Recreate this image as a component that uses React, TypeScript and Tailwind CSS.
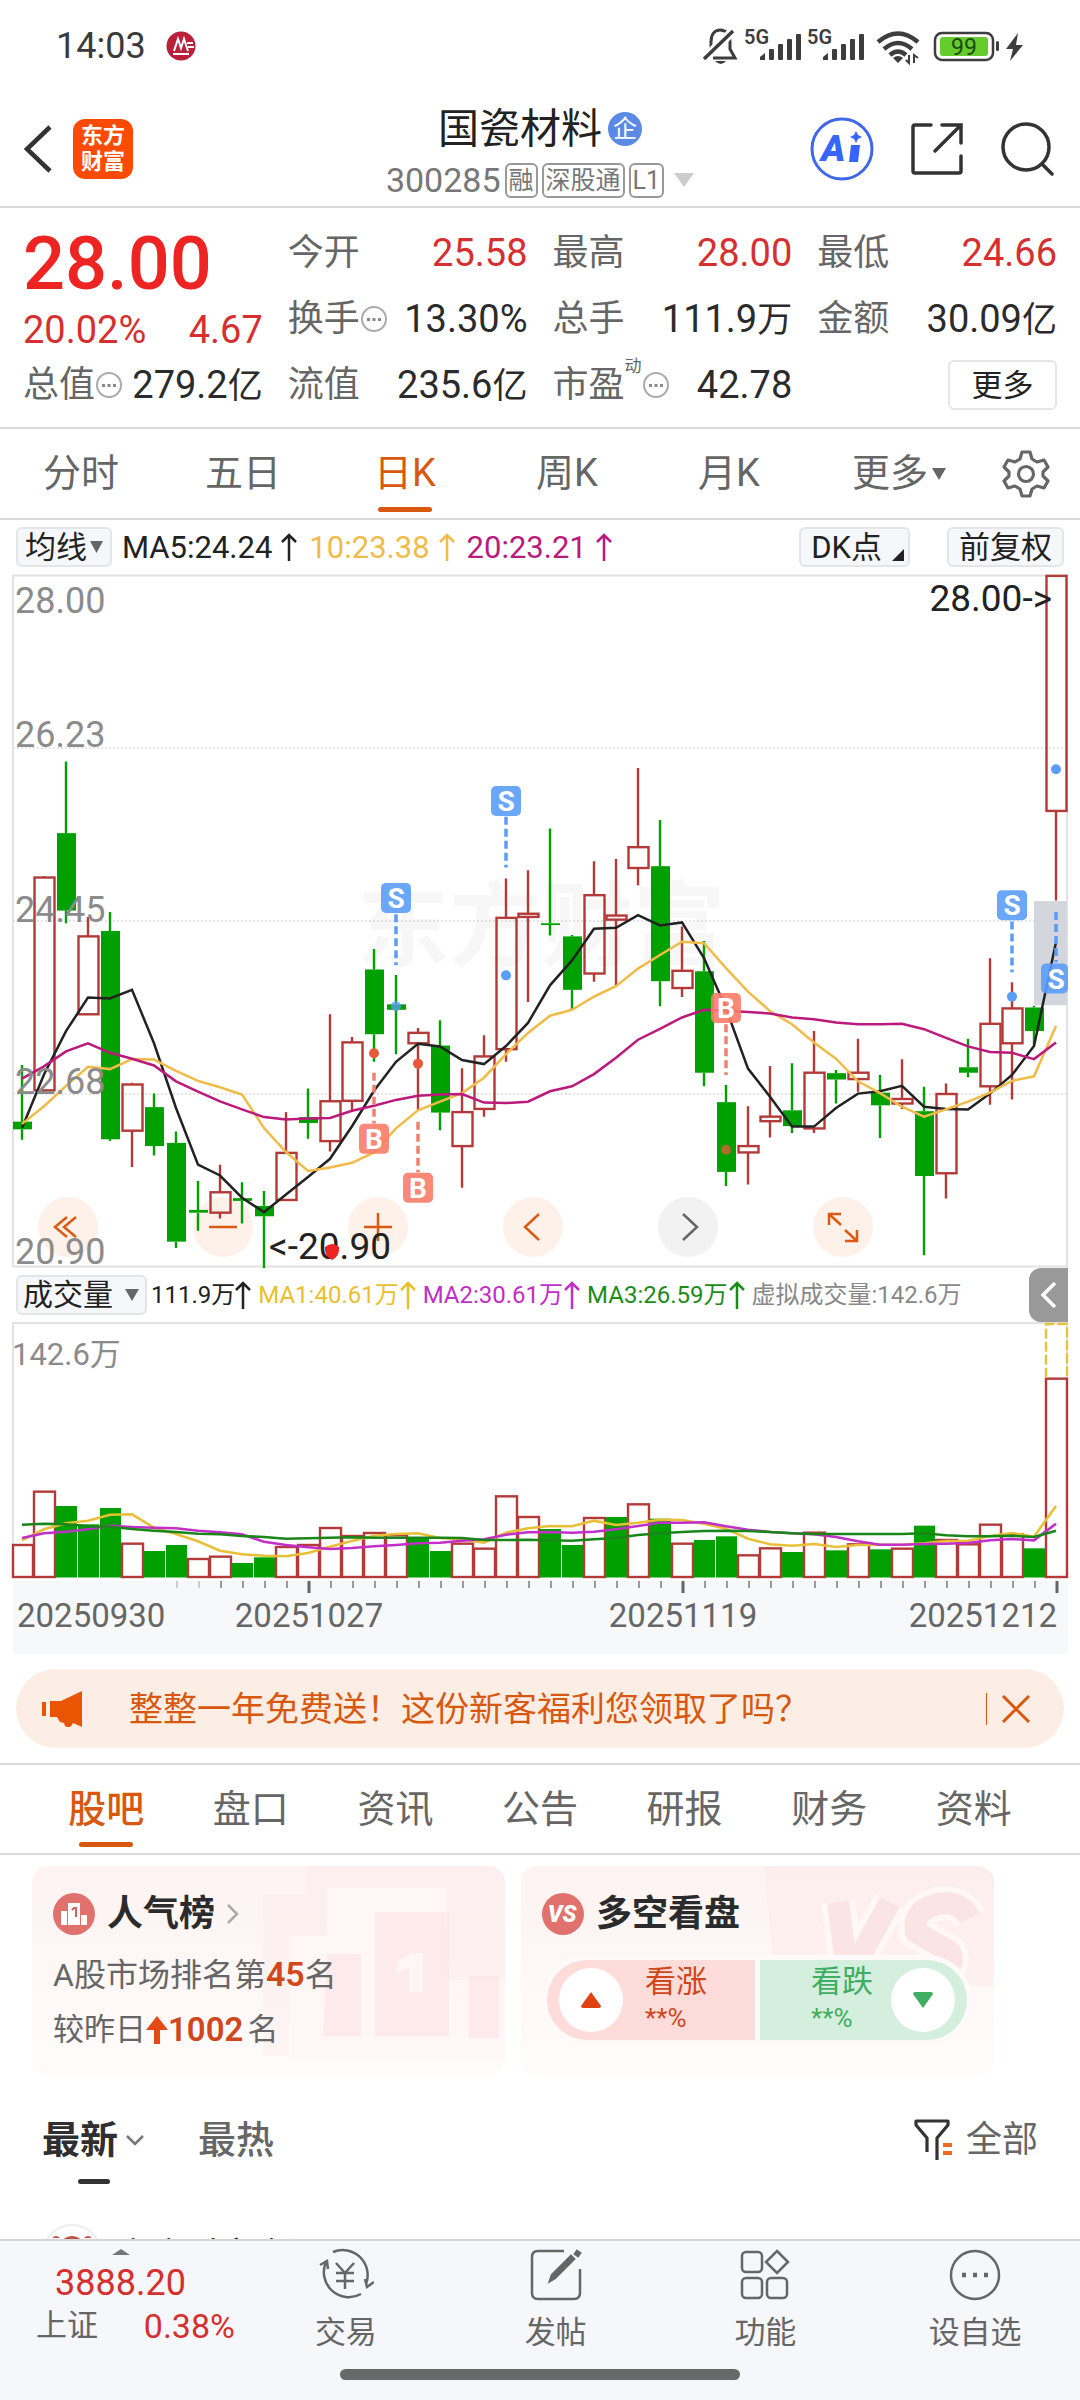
import { ReactNode } from 'react';

type Candle = [high: number, top: number, bottom: number, low: number, up: 0 | 1];

// high, body top, body bottom, low, rising
const candles: Candle[] = [
  [1093, 1218, 1235, 1258, 0], [676, 679, 1149, 1155, 1], [423, 581, 752, 780, 0], [766, 809, 981, 981, 1],
  [755, 797, 1257, 1261, 0], [1132, 1136, 1238, 1318, 1], [1156, 1186, 1272, 1293, 0], [1240, 1265, 1483, 1497, 0],
  [1349, 1413, 1419, 1459, 0], [1313, 1374, 1419, 1432, 1], [1352, 1387, 1393, 1443, 0], [1371, 1404, 1427, 1541, 0],
  [1197, 1287, 1391, 1391, 1], [1145, 1208, 1221, 1256, 0], [981, 1173, 1261, 1284, 1], [1031, 1043, 1172, 1195, 1],
  [837, 882, 1025, 1086, 0], [894, 959, 971, 1069, 0], [1011, 1022, 1045, 1192, 1], [994, 1050, 1198, 1237, 0],
  [1100, 1197, 1272, 1364, 1], [1027, 1074, 1190, 1207, 1], [681, 768, 1058, 1086, 1], [663, 759, 766, 954, 1],
  [571, 780, 784, 807, 0], [806, 809, 927, 970, 0], [643, 718, 891, 909, 1], [638, 763, 772, 918, 1],
  [437, 612, 658, 696, 1], [552, 654, 908, 963, 0], [787, 885, 923, 943, 1], [819, 886, 1110, 1140, 0],
  [1137, 1175, 1329, 1360, 0], [1184, 1272, 1286, 1357, 1], [1095, 1207, 1217, 1253, 1], [1089, 1193, 1228, 1243, 0],
  [1018, 1110, 1233, 1243, 1], [1104, 1111, 1125, 1178, 0], [1035, 1110, 1124, 1152, 1], [1115, 1154, 1182, 1254, 0],
  [1080, 1168, 1178, 1190, 1], [1141, 1195, 1338, 1513, 0], [1134, 1157, 1332, 1388, 1], [1035, 1098, 1110, 1120, 0],
  [857, 1002, 1140, 1181, 1], [910, 968, 1045, 1169, 1], [962, 966, 1018, 1050, 0], [12, 13, 532, 730, 1],
];

const ma5 = [1232, 1114, 1018, 944, 946, 927, 1045, 1188, 1313, 1337, 1386, 1418, 1379, 1340, 1300, 1228, 1150, 1086, 1046, 1052, 1082, 1091, 1051, 1000, 917, 862, 792, 790, 762, 785, 778, 857, 968, 1101, 1163, 1229, 1229, 1188, 1156, 1151, 1139, 1185, 1190, 1191, 1156, 1115, 1051, 822];
const ma10 = [1223, 1184, 1139, 1097, 1102, 1080, 1081, 1106, 1128, 1142, 1158, 1232, 1285, 1327, 1319, 1309, 1286, 1233, 1193, 1174, 1155, 1121, 1069, 1022, 984, 971, 942, 919, 880, 850, 821, 824, 879, 931, 974, 1003, 1043, 1079, 1129, 1155, 1185, 1207, 1191, 1174, 1154, 1128, 1118, 1007];
const ma20 = [1123, 1096, 1063, 1045, 1066, 1079, 1094, 1129, 1152, 1173, 1191, 1208, 1213, 1211, 1210, 1194, 1183, 1170, 1161, 1158, 1157, 1176, 1177, 1174, 1151, 1140, 1113, 1077, 1037, 1013, 988, 971, 973, 976, 979, 988, 992, 999, 1003, 1003, 1002, 1014, 1033, 1052, 1064, 1066, 1080, 1043];

const volumes = [852, 692, 738, 793, 744, 848, 873, 855, 894, 887, 909, 892, 858, 852, 801, 825, 816, 823, 836, 873, 848, 863, 706, 768, 807, 855, 771, 771, 730, 776, 848, 840, 829, 883, 862, 876, 815, 871, 850, 868, 863, 797, 837, 850, 791, 820, 865, 353];
// the volume pane colours follow the previous close, so a few bars differ from the candles
const volumeUp = '110001001100111111001111001010100110101010111101';
const vol1 = [841, 808, 790, 782, 764, 763, 803, 822, 844, 872, 883, 887, 889, 879, 860, 843, 827, 822, 820, 834, 838, 848, 818, 805, 798, 799, 782, 795, 788, 779, 780, 791, 806, 836, 853, 857, 852, 861, 855, 854, 854, 850, 843, 842, 828, 819, 830, 738];
const vol2 = [834, 820, 815, 808, 797, 801, 803, 805, 812, 817, 823, 845, 855, 862, 867, 864, 859, 855, 850, 848, 842, 838, 824, 817, 816, 818, 815, 808, 798, 788, 788, 787, 799, 809, 816, 820, 823, 831, 844, 854, 854, 852, 851, 849, 841, 837, 841, 791];
const vol3 = [794, 791, 793, 799, 800, 807, 812, 816, 821, 823, 828, 831, 836, 835, 833, 832, 833, 833, 833, 833, 834, 840, 840, 839, 841, 842, 838, 834, 825, 820, 816, 813, 812, 813, 816, 820, 822, 822, 822, 822, 822, 820, 826, 829, 829, 827, 831, 812];

const cx = (i: number) => 22 + i * 22;
const py = (v: number) => v / 2.208 - 4;
const vy = (v: number) => v / 3 - 62;
const line = (values: number[], y: (v: number) => number) =>
  values.map((v, i) => `${cx(i)},${y(v).toFixed(1)}`).join(' ');

const RED = '#b33a38';
const GREEN = '#00a000';

const signals = [
  { i: 16, kind: 'B', box: 1256, from: 1110, to: 1222, dot: 1067 },
  { i: 18, kind: 'B', box: 1364, from: 1218, to: 1330, dot: 1090 },
  { i: 32, kind: 'B', box: 967, from: 1003, to: 1115, dot: 1280 },
  { i: 17, kind: 'S', box: 724, from: 760, to: 872, dot: 963 },
  { i: 22, kind: 'S', box: 510, from: 545, to: 657, dot: 895 },
  { i: 45, kind: 'S', box: 740, from: 776, to: 888, dot: 942 },
  { i: 47, kind: 'S', box: 902, from: 755, to: 866, dot: 440 },
];

function StatusBar() {
  return (
    <div className="flex h-[92px] items-center justify-between pl-14 pr-[56px] text-[#3a3a3a]">
      <div className="flex items-center gap-5">
        <span className="text-[36px] leading-none">14:03</span>
        <svg className="h-[30px] w-[30px]" viewBox="0 0 30 30">
          <circle cx="15" cy="15" r="14.5" fill="#b9203a" />
          <path d="M8 20 12 8l3 9 3-9 4 12M7 23h16M21 12h6M22 16h6" fill="none" stroke="#fff" strokeWidth="2" />
        </svg>
      </div>
      <svg className="h-[40px] w-[322px]" viewBox="702 25 322 40" fill="#3d3d3d">
        <path d="M711 53V41c0-8 4-12 9-12 6 0 10 4 10 12v7l5 9h-22" fill="none" stroke="#3d3d3d" strokeWidth="3" />
        <path d="M704 58 733 30" stroke="#fff" strokeWidth="9" />
        <path d="M704 58 733 30" stroke="#3d3d3d" strokeWidth="3.5" />
        <path d="M715 60h11q-5 6-11 0Z" />
        <text x="744" y="43" fontSize="20" fontWeight="600">5G</text>
        <text x="807" y="43" fontSize="20" fontWeight="600">5G</text>
        {[0, 63].map((dx) => (
          <g key={dx}>
            <path d={`M${760 + dx} 59v-3l5-4v7Z`} />
            <rect x={769 + dx} y="48" width="5" height="11" rx="1" />
            <rect x={778 + dx} y="43" width="5" height="16" rx="1" />
            <rect x={787 + dx} y="38" width="5" height="21" rx="1" />
            <rect x={796 + dx} y="33" width="5" height="26" rx="1" />
          </g>
        ))}
        <g fill="none" stroke="#3d3d3d" strokeWidth="4.5">
          <path d="M878 41q20-17 40 0" />
          <path d="M884 48q14-12 28 0" />
          <path d="M890 54q8-7 16 0" />
        </g>
        <path d="M893 57q5-4 10 0l-5 5Z" />
        <path d="M909 54v8l-3-3M914 62v-8l4 3" fill="none" stroke="#3d3d3d" strokeWidth="2" />
        <rect x="935" y="32" width="58" height="27" rx="7" fill="#fff" stroke="#3d3d3d" strokeWidth="2.5" />
        <rect x="940" y="36" width="48" height="19" rx="3" fill="#66cc2c" />
        <text x="964" y="54" textAnchor="middle" fontSize="23" fill="#1d4a10">99</text>
        <rect x="996" y="40" width="3" height="10" rx="1.5" />
        <path d="m1018 32-12 16h7l-3 12 13-16h-7Z" />
      </svg>
    </div>
  );
}

function Tag({ children }: { children: ReactNode }) {
  return (
    <span className="flex h-[35px] items-center rounded-md border-2 border-[#999] px-[2px] text-[25px] leading-none">
      {children}
    </span>
  );
}

function Header() {
  return (
    <header className="relative flex h-[116px] items-center justify-between border-b-2 border-[#d9d9d9] pl-6 pr-[26px]">
      <div className="flex items-center gap-[21px]">
        <button aria-label="返回">
          <svg className="h-[48px] w-[28px]" viewBox="0 0 28 48" fill="none" stroke="#333" strokeWidth="4.5">
            <path d="M26 2 3 24l23 22" />
          </svg>
        </button>
        <a href="#home" className="flex h-[60px] w-[60px] flex-col items-center justify-center rounded-xl bg-[#fd4a05] text-[22px] font-bold leading-[26px] text-white">
          <span>东方</span>
          <span>财富</span>
        </a>
      </div>
      <div className="absolute inset-x-0 top-[13px] mx-auto flex w-fit flex-col items-center">
        <h1 className="flex items-center gap-[6px] text-[41px] leading-[48px] text-[#222]">
          国瓷材料
          <span className="flex h-[34px] w-[34px] items-center justify-center rounded-full bg-[#5b8ae5] text-[24px] leading-none text-white">企</span>
        </h1>
        <div className="flex items-center gap-1 text-[34px] leading-[54px] text-[#777]">
          300285
          <Tag>融</Tag>
          <Tag>深股通</Tag>
          <Tag>L1</Tag>
          <svg className="ml-[6px] h-[14px] w-[20px]" viewBox="0 0 20 14"><path d="M0 0h20L10 14Z" fill="#ccc" /></svg>
        </div>
      </div>
      <div className="flex items-center gap-[36px]">
        <button aria-label="AI">
          <svg className="h-[64px] w-[64px]" viewBox="0 0 64 64">
            <circle cx="32" cy="32" r="30" fill="none" stroke="#3f68e8" strokeWidth="3" />
            <text x="11" y="44" fontSize="37" fontWeight="900" fontStyle="italic" fill="#3565fb">A</text>
            <path d="M41 28h9l-2 17h-9ZM46 14l2 4 4 2-4 2-2 4-2-4-4-2 4-2Z" fill="#3565fb" />
          </svg>
        </button>
        <button aria-label="分享">
          <svg className="h-[54px] w-[54px]" viewBox="0 0 54 54" fill="none" stroke="#333" strokeWidth="3.5" strokeLinecap="round">
            <path d="M21 3H5q-2 0-2 2v44q0 2 2 2h44q2 0 2-2V34M32 3h19v18M51 3 25 29" />
          </svg>
        </button>
        <button aria-label="搜索">
          <svg className="h-[54px] w-[54px]" viewBox="0 0 54 54" fill="none" stroke="#333" strokeWidth="3.5" strokeLinecap="round">
            <circle cx="26" cy="25" r="23" />
            <path d="m42 42 10 10" />
          </svg>
        </button>
      </div>
    </header>
  );
}

function More() {
  return (
    <svg className="h-[28px] w-[28px] shrink-0" viewBox="0 0 28 28">
      <circle cx="14" cy="14" r="12" fill="none" stroke="#aaa" strokeWidth="2" />
      <path d="M7 13h3v3H7ZM12.500 13h3v3h-3ZM18 13h3v3h-3Z" fill="#888" />
    </svg>
  );
}

function Stat({ label, value, unit, red, more, sup }: { label: string; value: string; unit?: string; red?: boolean; more?: boolean; sup?: string }) {
  return (
    <div className="flex h-[66px] items-center justify-between whitespace-nowrap text-[36px] text-[#666]">
      <dt className="flex items-center">
        {label}
        {sup && <sup className="mb-5 text-[17px] leading-none">{sup}</sup>}
        {more && <More />}
      </dt>
      <dd className={red ? 'text-[38px] text-[#d5302f]' : 'text-[38px] text-[#2b2b2b]'}>
        {value}
        {unit && <span className="text-[35px]">{unit}</span>}
      </dd>
    </div>
  );
}

function Quote() {
  return (
    <section className="border-b-2 border-[#d9d9d9] px-[23px] pb-[9px] pt-3">
      <dl className="grid grid-cols-4 gap-x-[25px]">
        <div>
          <p className="text-[74px] font-medium leading-[88px] text-[#ee2423]">28.00</p>
          <p className="flex justify-between text-[38px] leading-[44px] text-[#d5302f]">
            <span>20.02%</span>
            <span>4.67</span>
          </p>
          <Stat label="总值" value="279.2" unit="亿" more />
        </div>
        <div>
          <Stat label="今开" value="25.58" red />
          <Stat label="换手" value="13.30%" more />
          <Stat label="流值" value="235.6" unit="亿" />
        </div>
        <div>
          <Stat label="最高" value="28.00" red />
          <Stat label="总手" value="111.9" unit="万" />
          <Stat label="市盈" sup="动" value="42.78" more />
        </div>
        <div>
          <Stat label="最低" value="24.66" red />
          <Stat label="金额" value="30.09" unit="亿" />
          <div className="flex h-[66px] items-center justify-end">
            <button className="h-[50px] w-[109px] rounded-md border-2 border-[#e6e6e6] text-[31px] leading-none text-[#222]">更多</button>
          </div>
        </div>
      </dl>
    </section>
  );
}

function PeriodTabs() {
  return (
    <nav className="flex h-[91px] items-center border-b-2 border-[#d9d9d9] text-[38px] text-[#666]">
      <div className="grid h-full flex-1 grid-cols-6">
        {['分时', '五日', '日K', '周K', '月K', '更多'].map((name) => (
          <button key={name} className={`relative flex items-center justify-center gap-1 ${name === '日K' ? 'text-[#d9580f]' : ''} ${name === '更多' ? 'pl-4' : ''}`}>
            {name}
            {name === '更多' && <svg className="h-[12px] w-[14px]" viewBox="0 0 14 12"><path d="M0 0h14L7 12Z" fill="#666" /></svg>}
            {name === '日K' && <span className="absolute bottom-[6px] h-[5px] w-[54px] rounded-full bg-[#d9580f]" />}
          </button>
        ))}
      </div>
      <button aria-label="设置" className="flex w-[108px] justify-center">
        <svg className="h-[48px] w-[48px]" viewBox="0 0 48 48" fill="none" stroke="#666" strokeWidth="3.2" strokeLinejoin="round">
          <path d="M20 2h8l2 7 5 3 7-2 4 7-5 5v4l5 5-4 7-7-2-5 3-2 7h-8l-2-7-5-3-7 2-4-7 5-5v-4l-5-5 4-7 7 2 5-3Z" />
          <circle cx="24" cy="24" r="7.500" />
        </svg>
      </button>
    </nav>
  );
}

function Up() {
  return (
    <svg className="h-[28px] w-[16px]" viewBox="0 0 16 28" fill="none" stroke="currentColor" strokeWidth="2.5">
      <path d="M8 28V2M1 9l7-7 7 7" />
    </svg>
  );
}

function MaBar() {
  const pill = 'flex h-[40px] items-center rounded-md border-2 border-[#e3e5e8] bg-[#f6f7fa] text-[#222]';
  return (
    <div className="flex h-[54px] items-center px-4 text-[31px] leading-none">
      <button className={`${pill} gap-[3px] px-[7px]`}>
        均线
        <svg className="h-[12px] w-[13px]" viewBox="0 0 13 12"><path d="M0 0h13L6.500 12Z" fill="#666" /></svg>
      </button>
      <div className="flex flex-1 items-center gap-3 pl-[10px]">
        <span className="flex items-center gap-[9px] text-[#222]">MA5:24.24<Up /></span>
        <span className="flex items-center gap-[9px] text-[#f0bb4b]">10:23.38<Up /></span>
        <span className="flex items-center gap-[9px] text-[#bb1a7c]">20:23.21<Up /></span>
      </div>
      <button className={`${pill} mr-[37px] gap-[10px] pl-[10px] pr-1`}>
        DK点
        <svg className="mt-4 h-[12px] w-[12px]" viewBox="0 0 12 12"><path d="M12 0v12H0Z" fill="#222" /></svg>
      </button>
      <button className={`${pill} px-[10px]`}>前复权</button>
    </div>
  );
}

function KLine() {
  return (
    <svg className="pointer-events-none relative block w-full" viewBox="0 0 1080 694">
      <text x="541" y="385" textAnchor="middle" fontSize="92" fontWeight="700" fill="#f7f7f7">东方财富</text>
      <path d="M13 1.500H1067V692.500H13Z" fill="none" stroke="#e2e2e2" strokeWidth="2" />
      <path d="M13 174H1067M13 347H1067M13 520H1067" stroke="#ccc" strokeDasharray="2 2" />
      {candles.map(([high, top, bottom, low, up], i) => (
        <g key={i} fill={up ? 'none' : GREEN} stroke={up ? RED : GREEN} strokeWidth="2.4">
          <path d={`M${cx(i)} ${py(high)}V${py(top)}M${cx(i)} ${py(bottom)}V${py(low)}`} />
          {up
            ? <rect x={cx(i) - 9.5} y={py(top)} width="20" height={py(bottom) - py(top)} />
            : <rect x={cx(i) - 9} y={py(top)} width="19" height={Math.max(py(bottom) - py(top), 1)} stroke="none" />}
        </g>
      ))}
      <rect x="1034" y={py(731)} width="33" height={py(961) - py(731)} fill="#d3d7dd" />
      <g fill="none" strokeWidth="2.5">
        <polyline points={line(ma5, py)} stroke="#222" />
        <polyline points={line(ma10, py)} stroke="#f1bb48" />
        <polyline points={line(ma20, py)} stroke="#bb1a7c" />
      </g>
      {signals.map((s) => (
        <g key={s.i} fill={s.kind === 'S' ? '#5b9df8' : '#f97c68'} stroke="none">
          <path d={`M${cx(s.i)} ${py(s.from)}V${py(s.to)}`} stroke={s.kind === 'S' ? '#5b9df8' : '#f0806f'} strokeWidth="3.5" strokeDasharray="8 4" />
          <circle cx={cx(s.i)} cy={py(s.dot)} r="5" fill={s.kind === 'S' ? '#5b9df8' : '#e8593a'} opacity={s.i === 32 || s.i === 17 ? 0.75 : 1} />
          <rect x={cx(s.i) - 15} y={py(s.box) - 15} width={s.i === 47 ? 27 : 30} height="30" rx="5" opacity="0.9" />
          <text x={cx(s.i)} y={py(s.box) + 10} textAnchor="middle" fontSize="28" fontWeight="700" fill="#fff">{s.kind}</text>
        </g>
      ))}
      <g fontSize="36" fill="#8b8b8b">
        <text x="15" y="39">28.00</text>
        <text x="15" y="173">26.23</text>
        <text x="15" y="348">24.45</text>
        <text x="15" y="520">22.68</text>
        <text x="15" y="690">20.90</text>
      </g>
      <g fontSize="37" fill="#222">
        <text x="1052" y="37" textAnchor="end">28.00-&gt;</text>
        <text x="269" y="685">&lt;-20.90</text>
      </g>
      <path d="M325 673q7-6 14 0 1 9-7 13-8-4-7-13Z" fill="#ee2423" />
    </svg>
  );
}

const controls = [
  { label: '最早', d: 'M29 20 17 30l12 10M38 20 26 30l12 10' },
  { label: '缩小', d: 'M16 30h28' },
  { label: '放大', d: 'M16 30h28M30 16v28' },
  { label: '向左', d: 'M36 17 22 30l14 13' },
  { label: '向右', d: 'M25 17l14 13-14 13' },
  { label: '全屏', d: 'M16 28V17h12M16 17l12 11M44 33v11H32M44 44 32 33' },
];

function ChartControls() {
  return (
    <div className="absolute inset-x-0 bottom-[11px] flex gap-[95px] pl-[38px]">
      {controls.map(({ label, d }) => (
        <button key={label} aria-label={label} className={`h-[60px] w-[60px] rounded-full ${label === '向右' ? 'bg-[#f2f2f2] text-[#666]' : 'bg-[#fef1e9] text-[#dd5a12]'}`}>
          <svg viewBox="0 0 60 60" fill="none" stroke="currentColor" strokeWidth="2.5"><path d={d} /></svg>
        </button>
      ))}
    </div>
  );
}

function VolumeBar() {
  return (
    <div className="flex h-[54px] items-center whitespace-nowrap pl-4 pr-3 text-[24px] leading-none">
      <button className="flex h-[40px] items-center gap-3 rounded-md border-2 border-[#e3e5e8] bg-[#f6f7fa] px-[5px] text-[30px] text-[#222]">
        成交量
        <svg className="mr-[1px] h-[12px] w-[14px]" viewBox="0 0 14 12"><path d="M0 0h14L7 12Z" fill="#666" /></svg>
      </button>
      <div className="flex flex-1 items-center gap-[7px] pl-1">
        <span className="flex items-center text-[#222]">111.9万<Up /></span>
        <span className="flex items-center gap-px text-[#e8c02e]">MA1:40.61万<Up /></span>
        <span className="flex items-center gap-px text-[#c02fc6]">MA2:30.61万<Up /></span>
        <span className="flex items-center gap-px text-[#1a8c1a]">MA3:26.59万<Up /></span>
        <span className="text-[#888]">虚拟成交量:142.6万</span>
      </div>
      <button aria-label="展开" className="flex h-full w-[39px] items-center justify-center rounded-l-xl bg-[#999]">
        <svg className="h-[26px] w-[16px]" viewBox="0 0 16 26" fill="none" stroke="#fff" strokeWidth="3.5"><path d="M14 1 2 13l12 12" /></svg>
      </button>
    </div>
  );
}

function Volume() {
  return (
    <svg className="block w-full" viewBox="0 0 1080 332">
      <rect x="13" y="259" width="1055" height="73" fill="#f7f8fa" />
      <path d="M13 255V1H1067V255" fill="none" stroke="#e2e2e2" strokeWidth="2" />
      <text x="12" y="43" fontSize="31" fill="#8b8b8b">142.6万</text>
      {volumes.map((v, i) =>
        volumeUp[i] === '1'
          ? <rect key={i} x={cx(i) - (i === 0 ? 9 : 10)} y={vy(v) + 1} width={i === 0 ? 20 : 21} height={254 - vy(v)} fill="#fff" stroke={RED} strokeWidth="2.4" />
          : <rect key={i} x={cx(i) - 10} y={vy(v)} width="21" height={255.500 - vy(v)} fill={GREEN} />
      )}
      <path d={`M1046 ${vy(353)}V2H1067V${vy(353)}`} fill="none" stroke="#e5c341" strokeWidth="2.4" strokeDasharray="10 3" />
      <g fill="none" strokeWidth="2.6">
        <polyline points={line(vol1, vy)} stroke="#e9bf38" />
        <polyline points={line(vol2, vy)} stroke="#c22fc8" />
        <polyline points={line(vol3, vy)} stroke="#1a861a" />
      </g>
      {volumes.map((_, i) =>
        i < 7 ? null : [13, 30, 47].includes(i)
          ? <path key={i} d={`M${cx(i) + 1} 259v12`} stroke="#666" strokeWidth="3" />
          : <path key={i} d={`M${cx(i) + 1} 259v7`} stroke={i < 9 ? '#ccc' : '#999'} strokeWidth="2" />
      )}
      <g fontSize="33" fill="#666">
        <text x="17" y="305">20250930</text>
        <text x="309" y="305" textAnchor="middle">20251027</text>
        <text x="683" y="305" textAnchor="middle">20251119</text>
        <text x="1057" y="305" textAnchor="end">20251212</text>
      </g>
    </svg>
  );
}

function Banner() {
  return (
    <div className="mx-4 mb-[15px] mt-[15px] flex h-[79px] items-center rounded-full bg-[#fceee5] pl-[26px] pr-[33px] text-[#d9580f]">
      <svg className="h-[36px] w-[40px]" viewBox="0 0 40 36" fill="#ea5504">
        <path d="M0 11h4v14H0ZM8 10h11L40 0v36l-9-4q-2 5-6 4l-2-1-1-3-4-1-3-5H8Z" />
      </svg>
      <a href="#offer" className="flex-1 pl-[47px] text-[34px] leading-none">整整一年免费送！这份新客福利您领取了吗？</a>
      <span className="mr-[14px] h-[32px] w-px bg-[#d9580f]" />
      <button aria-label="关闭">
        <svg className="h-[28px] w-[30px]" viewBox="0 0 30 28" fill="none" stroke="currentColor" strokeWidth="3"><path d="m2 1 26 26M28 1 2 27" /></svg>
      </button>
    </div>
  );
}

function InfoTabs() {
  return (
    <nav className="flex h-[92px] items-center border-y-2 border-[#d9d9d9] px-[34px] text-[38px] text-[#666]">
      {['股吧', '盘口', '资讯', '公告', '研报', '财务', '资料'].map((name) => (
        <button key={name} className={`relative flex h-full flex-1 items-center justify-center ${name === '股吧' ? 'font-medium text-[#d9580f]' : ''}`}>
          {name}
          {name === '股吧' && <span className="absolute bottom-[6px] h-[5px] w-[54px] rounded-full bg-[#d9580f]" />}
        </button>
      ))}
    </nav>
  );
}

function RankCard() {
  return (
    <article className="relative h-[210px] flex-1 overflow-hidden rounded-2xl bg-gradient-to-b from-[#fdf3f2] to-[#fffcfb] px-[21px] pt-[25px]">
      <svg className="absolute bottom-0 right-0 h-full w-[242px]" viewBox="0 0 242 210">
        <path d="M0 28h44V0h198v190H0Z" fill="#fbe9e8" opacity="0.4" />
        <path d="M26 70h38V22h120v92h58v80H26Z" fill="#fff8f7" opacity="0.8" />
        <path d="M64 88h34v82H60ZM112 46h74v124h-74ZM206 110h30v62h-30Z" fill="#f9dfde" opacity="0.5" />
        <path d="M134 96l14-9h12v39h-14v-24l-12 5Z" fill="#fff6f5" />
      </svg>
      <h2 className="relative flex items-center gap-3 text-[36px] font-bold leading-[46px] text-[#2b2b2b]">
        <svg className="h-[42px] w-[42px]" viewBox="0 0 42 42">
          <circle cx="21" cy="21" r="21" fill="#e0716c" />
          <path d="M8 18h6v14H8ZM15 10h12v22H15ZM28 22h6v10h-6Z" fill="#fff" />
          <path d="m19 17 2-2h2v9" fill="none" stroke="#d9605c" strokeWidth="2" />
        </svg>
        <span>人气榜</span>
        <svg className="h-[20px] w-[12px]" viewBox="0 0 12 20" fill="none" stroke="#aaa" strokeWidth="2.5"><path d="m1 1 9 9-9 9" /></svg>
      </h2>
      <p className="relative mt-[9px] text-[32px] leading-[56px] text-[#666]">A股市场排名第<b className="text-[34px] font-semibold text-[#d0471b]">45</b>名</p>
      <p className="relative flex items-center text-[31px] leading-[54px] text-[#666]">
        较昨日
        <svg className="h-[28px] w-[22px]" viewBox="0 0 22 28" fill="#e64a14"><path d="M11 0 22 14h-8v14H8V14H0Z" /></svg>
        <b className="mr-1 text-[33px] font-semibold text-[#d0471b]">1002</b> 名
      </p>
    </article>
  );
}

function VoteCard() {
  return (
    <article className="relative h-[210px] flex-1 overflow-hidden rounded-2xl bg-gradient-to-b from-[#fdf3f2] to-[#fffcfb] px-[21px] pt-[25px]">
      <svg className="absolute right-0 top-0 h-full w-[230px]" viewBox="0 0 230 210">
        <path d="M0 0h230v120H12Z" fill="#fbe9e8" opacity="0.5" />
        <g fill="none" strokeLinejoin="round">
          <path d="M74 36l10 76 42-76M206 52q-10-18-32-14-26 6-22 28l34 20q8 18-20 24" stroke="#fff8f7" strokeWidth="34" />
          <path d="M74 36l10 76 42-76M206 52q-10-18-32-14-26 6-22 28l34 20q8 18-20 24" stroke="#fae0df" strokeWidth="22" opacity="0.8" />
        </g>
      </svg>
      <h2 className="relative flex items-center gap-3 text-[36px] font-bold leading-[46px] text-[#2b2b2b]">
        <svg className="h-[42px] w-[42px]" viewBox="0 0 42 42">
          <circle cx="21" cy="21" r="21" fill="#e0716c" />
          <text x="20" y="29" textAnchor="middle" fontSize="23" fontWeight="900" fontStyle="italic" fill="#fff">VS</text>
        </svg>
        多空看盘
      </h2>
      <div className="relative mt-[18px] flex h-[90px] w-[430px] gap-[5px] rounded-full bg-[#fffafa] p-[5px]">
        <button className="flex flex-1 items-center gap-[22px] rounded-l-full bg-[#fddcd9] pl-3 text-left text-[#d0471b]">
          <span className="flex h-[64px] w-[64px] items-center justify-center rounded-full bg-white">
            <svg className="h-[16px] w-[20px]" viewBox="0 0 20 16"><path d="M10 0 20 14q0 2-2 2H2q-2 0-2-2Z" fill="#e04312" /></svg>
          </span>
          <span className="pb-1 text-[31px] leading-none">看涨<span className="mt-2 block text-[26px]">**%</span></span>
        </button>
        <button className="flex flex-1 items-center justify-end gap-[18px] rounded-r-full bg-[#d5efde] pr-3 text-left text-[#3fae62]">
          <span className="pb-1 text-[31px] leading-none">看跌<span className="mt-2 block text-[26px]">**%</span></span>
          <span className="flex h-[64px] w-[64px] items-center justify-center rounded-full bg-white">
            <svg className="h-[16px] w-[20px]" viewBox="0 0 20 16"><path d="M10 16 20 2q0-2-2-2H2Q0 0 0 2Z" fill="#3fae62" /></svg>
          </span>
        </button>
      </div>
    </article>
  );
}

function Feed() {
  return (
    <section className="px-[42px]">
      <div className="flex h-[116px] items-center pt-3 text-[38px]">
        <button className="relative flex h-full items-center gap-2 font-bold text-[#2f2f2f]">
          最新
          <svg className="h-[11px] w-[18px]" viewBox="0 0 18 11" fill="none" stroke="#777" strokeWidth="2.500"><path d="m1 1 8 8 8-8" /></svg>
          <span className="absolute bottom-2 left-9 h-[5px] w-[32px] rounded-full bg-[#333]" />
        </button>
        <button className="flex-1 pl-[54px] text-left font-medium text-[#666]">最热</button>
        <button className="flex items-center gap-3 text-[36px] text-[#666]">
          <svg className="h-[42px] w-[40px]" viewBox="0 0 40 42" fill="none" stroke="#333" strokeWidth="3.200" strokeLinejoin="round">
            <path d="M13 33V19L2 6V2h32v4L23 19v22" />
            <path d="M29 26h9M29 34h9" stroke="#ee6a1f" strokeWidth="4" />
          </svg>
          全部
        </button>
      </div>
      <div className="mt-8 flex items-start gap-4 text-[34px] leading-[62px]">
        <svg className="h-[60px] w-[60px]" viewBox="0 0 60 60">
          <circle cx="30" cy="30" r="29" fill="#fff" stroke="#eee" strokeWidth="2" />
          <path d="M10 14q4-4 8 0M20 16q10-8 20 0M42 14q4-4 8 0" fill="#c0504a" />
        </svg>
        <a href="#post" className="text-[#222]">东方财富资讯</a>
      </div>
    </section>
  );
}

const actions = [
  { label: '交易', icon: <><path d="M15 5A25 25 0 0 1 48 37M43 47A25 25 0 0 1 8 15M2 18l7-4 1 8M56 35l-7 5-2-8" /><path d="m18 16 9 10 9-10M27 26v16M18 26h18M18 34h18" /></> },
  { label: '发帖', icon: <><path d="M36 4H10q-6 0-6 6v36q0 6 6 6h36q6 0 6-6V22" /><path d="m22 34 2-6L43 9l3 3-19 19ZM47 7l2-3 3 2-2 3Z" fill="#666" /></> },
  { label: '功能', icon: <><rect x="5" y="5" width="20" height="20" rx="4" /><rect x="5" y="31" width="20" height="20" rx="4" /><rect x="30" y="31" width="20" height="20" rx="4" /><path d="m40 4 11 11-11 11-11-11Z" /></> },
  { label: '设自选', icon: <><circle cx="28" cy="28" r="24" /><path d="M15 28h4M26 28h4M37 28h4" strokeWidth="4.5" /></> },
];

function BottomBar() {
  return (
    <footer className="relative z-10 h-[161px] shrink-0 border-t-2 border-[#d5d5d5] bg-[#f6f7fa]">
      <div className="flex h-[128px] text-[#666]">
        <a href="#index" className="flex w-[241px] flex-col items-center">
          <svg className="mt-2 h-[6px] w-[18px]" viewBox="0 0 18 6"><path d="M9 0 18 6H0Z" fill="#777" /></svg>
          <span className="mt-1 text-[36px] leading-[48px] text-[#d5302f]">3888.20</span>
          <span className="flex w-full items-center justify-between pl-9 pr-[6px] text-[31px] leading-[38px]">
            上证
            <span className="text-[34px] text-[#d5302f]">0.38%</span>
          </span>
        </a>
        {actions.map(({ label, icon }) => (
          <button key={label} className="flex flex-1 flex-col items-center gap-2 pt-[6px] text-[31px] leading-[44px]">
            <svg className="h-[56px] w-[56px]" viewBox="0 0 56 56" fill="none" stroke="#666" strokeWidth="2.500">{icon}</svg>
            {label}
          </button>
        ))}
      </div>
      <div className="mx-auto h-[11px] w-[37%] rounded-full bg-[#686a69]" />
    </footer>
  );
}

export default function App() {
  return (
    <div className="flex h-screen flex-col bg-white font-['Roboto','Noto_Sans_CJK_SC',sans-serif]">
      <main className="min-h-0 flex-1 overflow-hidden">
        <StatusBar />
        <Header />
        <Quote />
        <PeriodTabs />
        <MaBar />
        <div className="relative">
          <ChartControls />
          <KLine />
        </div>
        <VolumeBar />
        <Volume />
        <Banner />
        <InfoTabs />
        <div className="flex gap-4 pl-8 pr-[86px] pt-[11px]">
          <RankCard />
          <VoteCard />
        </div>
        <Feed />
      </main>
      <BottomBar />
    </div>
  );
}
